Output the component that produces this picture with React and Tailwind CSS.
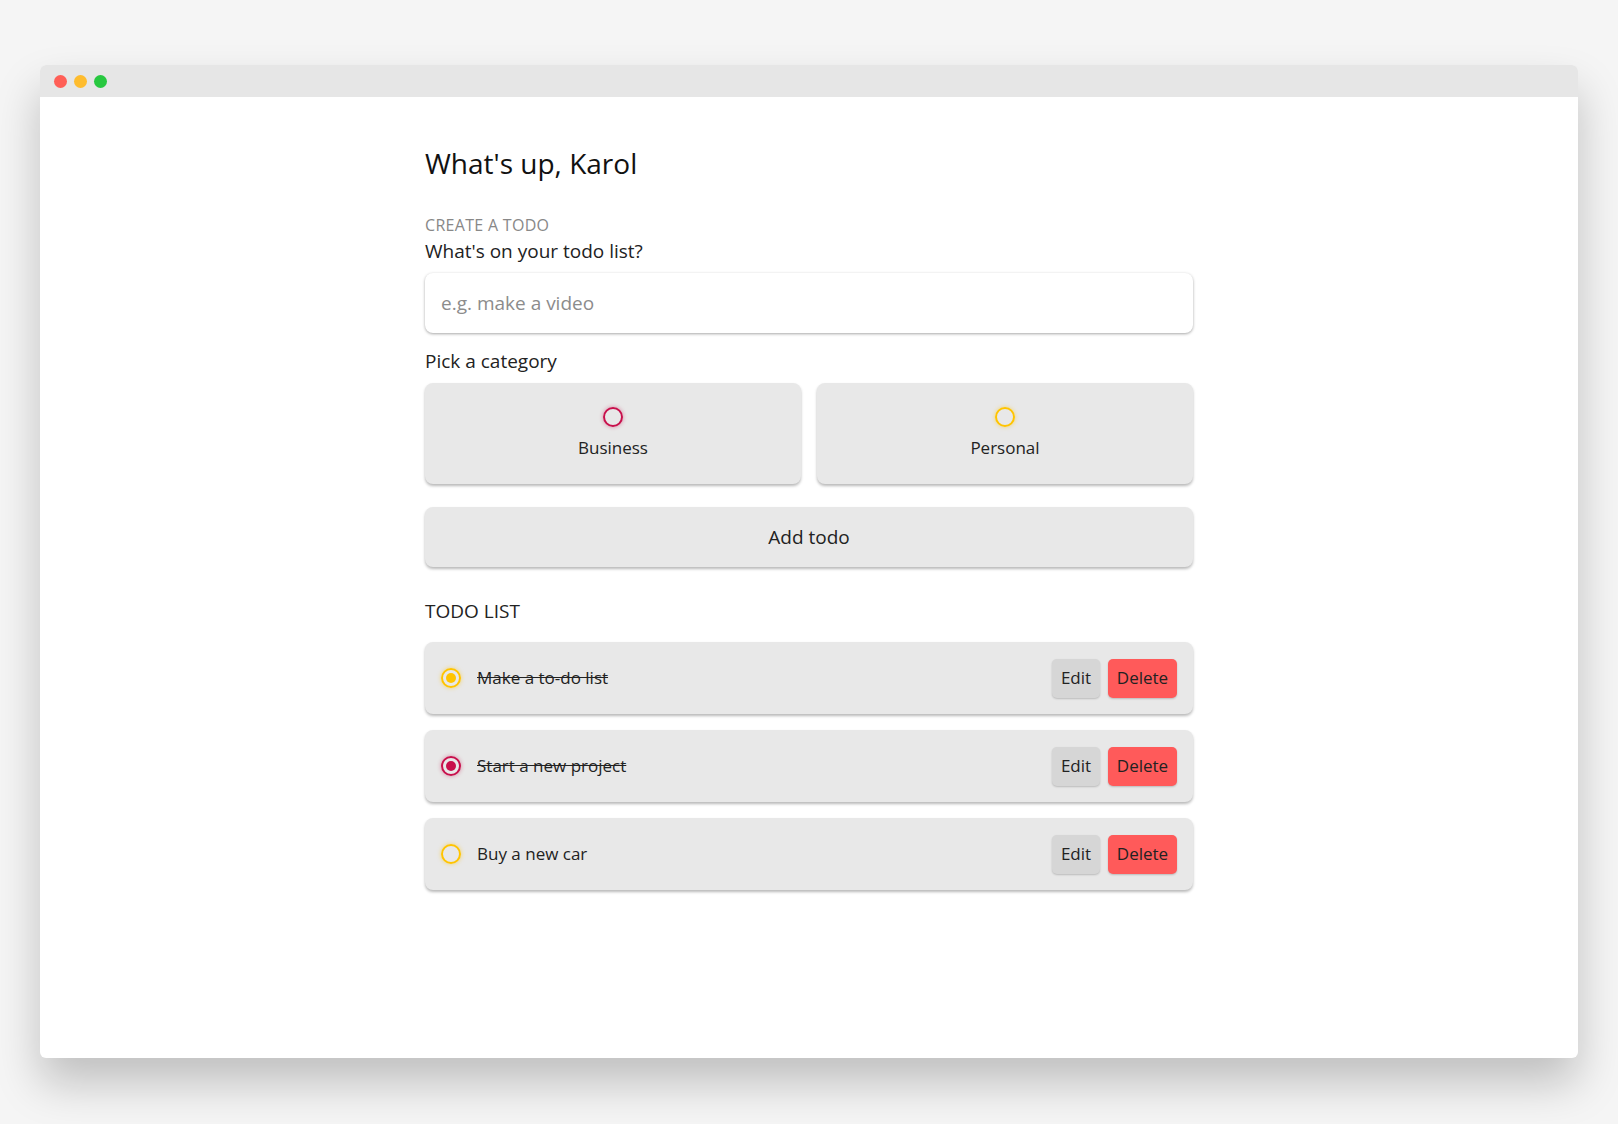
import React from "react";

const todos = [
  { id: 1, text: "Make a to-do list", category: "personal", done: true },
  { id: 2, text: "Start a new project", category: "business", done: true },
  { id: 3, text: "Buy a new car", category: "personal", done: false },
];

function Bubble({ category, done, size = "h-5 w-5" }) {
  const ring =
    category === "business"
      ? "border-[#c8104c] shadow-[0_0_4px_rgba(200,16,76,0.45)]"
      : "border-[#ffc400] shadow-[0_0_4px_rgba(255,196,0,0.55)]";
  const dot = category === "business" ? "bg-[#c8104c]" : "bg-[#ffc400]";
  return (
    <span className={`flex ${size} items-center justify-center rounded-full border-2 ${ring}`}>
      {done ? <span className={`h-[10px] w-[10px] rounded-full ${dot}`} /> : null}
    </span>
  );
}

function CategoryCard({ label, category }) {
  return (
    <div className="flex h-[101px] flex-col items-center justify-center rounded-lg bg-[#e8e8e8] shadow-[0_2px_3px_rgba(0,0,0,0.28)]">
      <Bubble category={category} done={false} />
      <div className="mt-[8px] text-[17px] text-[#222]">{label}</div>
    </div>
  );
}

function TodoItem({ todo }) {
  return (
    <div className="flex h-[72px] items-center rounded-lg bg-[#e8e8e8] pl-4 pr-4 shadow-[0_2px_3px_rgba(0,0,0,0.28)]">
      <Bubble category={todo.category} done={todo.done} />
      <div className={`ml-[16px] flex-1 text-[17px] text-[#222] ${todo.done ? "line-through" : ""}`}>
        {todo.text}
      </div>
      <button className="h-[39px] w-[48px] rounded-[5px] bg-[#d6d6d6] text-[17px] text-[#222] shadow-[0_1px_2px_rgba(0,0,0,0.2)]">
        Edit
      </button>
      <button className="ml-2 h-[39px] w-[69px] rounded-[5px] bg-[#ff5a5a] text-[17px] text-[#222] shadow-[0_1px_2px_rgba(0,0,0,0.2)]">
        Delete
      </button>
    </div>
  );
}

export default function App() {
  return (
    <div
      className="min-h-screen bg-[#f5f5f5] px-[40px] pt-[65px] pb-[66px]"
      style={{ fontFamily: '"Open Sans", "Liberation Sans", sans-serif' }}
    >
      <div className="h-[993px] overflow-hidden rounded-md bg-white shadow-[0_25px_45px_rgba(0,0,0,0.22)]">
        <div className="flex h-[32px] items-center gap-[7px] bg-[#e6e6e6] pl-[14px]">
          <span className="h-[13px] w-[13px] rounded-full bg-[#ff5f57]" />
          <span className="h-[13px] w-[13px] rounded-full bg-[#febc2e]" />
          <span className="h-[13px] w-[13px] rounded-full bg-[#28c840]" />
        </div>

        <div className="mx-auto w-[768px] pt-[49px]">
          <h1 className="text-[28px] leading-[34px] text-[#111]">What's up, Karol</h1>

          <div className="mt-[35px] text-[16px] leading-[20px] tracking-[0.3px] text-[#888]">CREATE A TODO</div>
          <div className="mt-[4px] text-[19px] leading-[24px] text-[#222]">What's on your todo list?</div>
          <div className="mt-[10px] flex h-[60px] items-center rounded-lg bg-white px-4 shadow-[0_1px_3px_rgba(0,0,0,0.35)]">
            <span className="text-[19px] text-[#8c8c8c]">e.g. make a video</span>
          </div>

          <div className="mt-[16px] text-[19px] leading-[24px] text-[#222]">Pick a category</div>
          <div className="mt-[10px] grid grid-cols-2 gap-4">
            <CategoryCard label="Business" category="business" />
            <CategoryCard label="Personal" category="personal" />
          </div>

          <div className="mt-[23px] flex h-[60px] items-center justify-center rounded-lg bg-[#e8e8e8] text-[19px] text-[#222] shadow-[0_2px_3px_rgba(0,0,0,0.28)]">
            Add todo
          </div>

          <div className="mt-[32px] text-[19px] leading-[24px] text-[#222]">TODO LIST</div>
          <div className="mt-[19px] flex flex-col gap-4">
            {todos.map((t) => (
              <TodoItem key={t.id} todo={t} />
            ))}
          </div>
        </div>
      </div>
    </div>
  );
}
